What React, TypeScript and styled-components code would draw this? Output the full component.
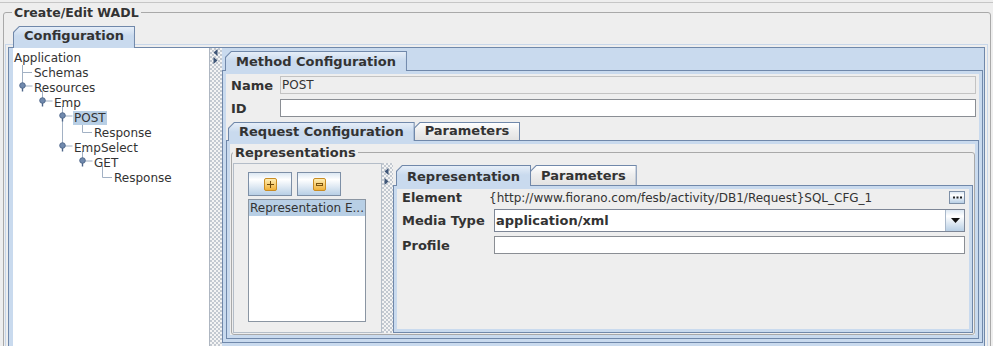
import React from "react";
import styled, { createGlobalStyle, css } from "styled-components";

const FONT = `"DejaVu Sans", "Liberation Sans", sans-serif`;
const LINE = "#7088aa";
const BAND = "#c9daee";
const SEL_GRAD = "linear-gradient(to bottom, #e6eef8 0px, #c9daee 9px, #c9daee 100%)";
const UNSEL_GRAD = "linear-gradient(to bottom, #ffffff 0px, #eeeeee 45%, #e2e2e2 100%)";
const BTN_GRAD = "linear-gradient(to bottom, #dde8f3 0%, #ffffff 30%, #b8cfe5 100%)";

const Global = createGlobalStyle`
  html, body { margin: 0; padding: 0; background: #eeeeee; }
  body { font-family: ${FONT}; color: #333333; }
  *, *::before, *::after { box-sizing: border-box; }
`;

const Screen = styled.div`
  width: 993px;
  height: 346px;
  overflow: hidden;
  background: #eeeeee;
  padding-top: 2px;
`;

const TopRule = styled.div`
  height: 1px;
  background: #c6c6c6;
`;

const Group = styled.fieldset<{ $m: string; $p: string }>`
  margin: ${(p) => p.$m};
  padding: ${(p) => p.$p};
  border: 1px solid #a9a9a9;
  border-radius: 3px;
  min-width: 0;
`;

const GroupTitle = styled.legend<{ $ml: number; $size: number }>`
  margin-left: ${(p) => p.$ml}px;
  padding: 0 2px;
  font-family: ${FONT};
  font-weight: bold;
  font-size: ${(p) => p.$size}px;
  line-height: 15px;
  color: #333333;
  white-space: nowrap;
`;

/* ---------- tabbed pane ---------- */
const PaneShell = styled.div<{ $pt: number; $mt: number; $w?: number; $grow?: boolean }>`
  display: flex;
  flex-direction: column;
  padding-top: ${(p) => p.$pt}px;
  margin-top: ${(p) => p.$mt}px;
  ${(p) => p.$w !== undefined && css`width: ${p.$w}px; flex: none;`}
  ${(p) => p.$grow && css`align-self: stretch;`}
`;

const TabStrip = styled.div<{ $pl: number }>`
  display: flex;
  align-items: flex-end;
  padding-left: ${(p) => p.$pl}px;
  position: relative;
  z-index: 2;
`;

const Tab = styled.div<{ $active: boolean; $h: number }>`
  position: relative;
  z-index: ${(p) => (p.$active ? 2 : 1)};
  height: ${(p) => (p.$active ? p.$h : p.$h - 1)}px;
  margin-bottom: ${(p) => (p.$active ? -1 : 0)}px;
  margin-right: -1px;
  padding: 1px 1px 0 1px;
  background: ${LINE};
  clip-path: polygon(0 6px, 6px 0, 100% 0, 100% 100%, 0 100%);
`;

const TabFace = styled.div<{ $active: boolean; $pb: number }>`
  height: 100%;
  display: flex;
  align-items: center;
  padding: 0 10px ${(p) => p.$pb}px 10px;
  background: ${(p) => (p.$active ? SEL_GRAD : UNSEL_GRAD)};
  clip-path: polygon(0 5.5px, 5.5px 0, 100% 0, 100% 100%, 0 100%);
  font-family: ${FONT};
  font-weight: bold;
  font-size: 13px;
  line-height: 1;
  color: #333333;
  white-space: nowrap;
`;

const TabBody = styled.div<{ $pad: string; $halo?: boolean; $grow?: boolean }>`
  position: relative;
  z-index: 0;
  border: 1px solid ${LINE};
  background: ${BAND};
  padding: ${(p) => p.$pad};
  display: flex;
  flex-direction: column;
  ${(p) => p.$halo && css`box-shadow: 0 0 0 2px #eeeeee, 0 0 0 3px #c8d7ea;`}
  ${(p) => p.$grow && css`flex: 1; min-height: 0;`}
`;

type PaneProps = {
  tabs: string[];
  tabH: number;
  stripPl: number;
  pt?: number;
  mt?: number;
  pb?: number;
  bodyPad: string;
  halo?: boolean;
  width?: number;
  grow?: boolean;
  children: React.ReactNode;
};

function TabbedPane({ tabs, tabH, stripPl, pt = 0, mt = 0, pb = 0, bodyPad, halo, width, grow, children }: PaneProps) {
  return (
    <PaneShell $pt={pt} $mt={mt} $w={width} $grow={grow}>
      <TabStrip $pl={stripPl}>
        {tabs.map((t, i) => (
          <Tab key={t} $active={i === 0} $h={tabH}>
            <TabFace $active={i === 0} $pb={pb}>{t}</TabFace>
          </Tab>
        ))}
      </TabStrip>
      <TabBody $pad={bodyPad} $halo={halo} $grow={grow}>
        {children}
      </TabBody>
    </PaneShell>
  );
}

/* ---------- config split ---------- */
const ConfigSplit = styled.div`
  display: flex;
  align-items: stretch;
  height: 320px;
`;

const TreePanel = styled.div`
  position: relative;
  width: 196px;
  flex: none;
  background: #ffffff;
  padding-top: 2px;
`;

const TreeRow = styled.div<{ $depth: number }>`
  height: 15px;
  display: flex;
  align-items: center;
  padding-left: ${(p) => 1 + p.$depth * 20}px;
  font-family: ${FONT};
  font-size: 12px;
  color: #333333;
  white-space: nowrap;
  position: relative;
  z-index: 1;
`;

const TreeLabel = styled.span<{ $selected?: boolean }>`
  display: inline-block;
  height: 14px;
  line-height: 14px;
  padding: 0 1px;
  margin-left: -1px;
  background: ${(p) => (p.$selected ? "#b8cfe5" : "transparent")};
`;

const TreeLines = styled.svg`
  position: absolute;
  left: 0;
  top: 0;
  pointer-events: none;
`;

const Divider = styled.div<{ $w: number; $pt: number; $pl: number; $gap: number; $edge?: boolean }>`
  width: ${(p) => p.$w}px;
  flex: none;
  background-color: #f4f4f4;
  background-image: radial-gradient(circle at 1px 1px, #a3adba 0.55px, transparent 0.95px),
    radial-gradient(circle at 1px 1px, #a3adba 0.55px, transparent 0.95px);
  background-size: 4px 4px;
  background-position: 0 0, 2px 2px;
  ${(p) => p.$edge && css`border-left: 1px solid #aeb6c1;`}
  display: flex;
  flex-direction: column;
  align-items: flex-start;
  gap: ${(p) => p.$gap}px;
  padding-top: ${(p) => p.$pt}px;
  padding-left: ${(p) => p.$pl}px;
`;

const ArrowGlyph = ({ dir }: { dir: "left" | "right" }) => (
  <svg width="5" height="7" viewBox="0 0 5 7" style={{ display: "block" }}>
    {dir === "left" ? (
      <polygon points="4.5,0 0.5,3.5 4.5,7" fill="#3f5677" />
    ) : (
      <polygon points="0.5,0 4.5,3.5 0.5,7" fill="#3f5677" />
    )}
  </svg>
);

/* ---------- method pane ---------- */
const PaneInner = styled.div<{ $pad?: string; $grow?: boolean }>`
  background: #eeeeee;
  display: flex;
  flex-direction: column;
  padding: ${(p) => p.$pad ?? "0"};
  ${(p) => p.$grow && css`flex: 1;`}
`;

const FieldGrid = styled.div`
  display: grid;
  grid-template-columns: 49px 1fr;
  grid-auto-rows: 18px;
  row-gap: 5px;
  padding: 0 3px 0 5px;
  align-items: center;
`;

const FieldLabel = styled.span`
  font-family: ${FONT};
  font-weight: bold;
  font-size: 13px;
  color: #333333;
  white-space: nowrap;
`;

const TextBox = styled.div<{ $readonly?: boolean }>`
  height: 100%;
  display: flex;
  align-items: center;
  padding-left: 1px;
  background: ${(p) => (p.$readonly ? "#eeeeee" : "#ffffff")};
  border: 1px solid ${(p) => (p.$readonly ? "#c3c3c3" : "#8a8e94")};
  font-family: ${FONT};
  font-size: 12px;
  color: #333333;
  white-space: nowrap;
  overflow: hidden;
  flex: 1;
  min-width: 0;
`;

/* ---------- representations ---------- */
const RepSplit = styled.div`
  display: flex;
  height: 170px;
`;

const ListSide = styled.div`
  width: 149px;
  flex: none;
  border: 1px solid #b4bdc8;
  padding: 8px 0 0 14px;
  display: flex;
  flex-direction: column;
`;

const ButtonRow = styled.div`
  display: flex;
  gap: 5px;
`;

const ToolButton = styled.div`
  width: 44px;
  height: 24px;
  border: 1px solid #7d8fa6;
  background: ${BTN_GRAD};
  display: flex;
  align-items: center;
  justify-content: center;
`;

const ItemList = styled.div`
  margin-top: 3px;
  width: 118px;
  height: 123px;
  border: 1px solid #8a95a2;
  background: #ffffff;
`;

const ListItem = styled.div<{ $selected?: boolean }>`
  height: 16px;
  line-height: 16px;
  padding-left: 1px;
  background: ${(p) => (p.$selected ? "#b8cfe5" : "transparent")};
  font-family: ${FONT};
  font-size: 12px;
  color: #333333;
  white-space: nowrap;
`;

const FormLine = styled.div<{ $h: number; $mt: number }>`
  display: grid;
  grid-template-columns: 92px 1fr;
  align-items: center;
  height: ${(p) => p.$h}px;
  margin-top: ${(p) => p.$mt}px;
`;

const ValueCell = styled.div`
  display: flex;
  align-items: center;
  height: 100%;
  min-width: 0;
`;

const ValueText = styled.span`
  flex: 1;
  margin-left: -5px;
  font-family: ${FONT};
  font-size: 12px;
  color: #333333;
  white-space: nowrap;
`;

const SmallButton = styled.div`
  width: 16px;
  height: 13px;
  flex: none;
  border: 1px solid #7d8fa6;
  background: ${BTN_GRAD};
  display: flex;
  align-items: center;
  justify-content: center;
`;

const Combo = styled.div`
  display: flex;
  height: 100%;
  border: 1px solid #7d8696;
  background: #ffffff;
`;

const ComboText = styled.div`
  flex: 1;
  display: flex;
  align-items: center;
  padding-left: 1px;
  font-family: ${FONT};
  font-weight: bold;
  font-size: 13px;
  color: #333333;
`;

const ComboArrow = styled.div`
  width: 19px;
  flex: none;
  border-left: 1px solid #a9b8ca;
  background: ${BTN_GRAD};
  display: flex;
  align-items: center;
  justify-content: center;
`;

const SquareIcon = ({ minus, id }: { minus?: boolean; id: string }) => (
  <svg width="13" height="13" viewBox="0 0 13 13" style={{ display: "block" }}>
    <defs>
      <linearGradient id={id} x1="0" y1="0" x2="0" y2="1">
        <stop offset="0" stopColor="#fff0b8" />
        <stop offset="1" stopColor="#f0ae32" />
      </linearGradient>
    </defs>
    <rect x="0.5" y="0.5" width="12" height="12" rx="1.5" fill={`url(#${id})`} stroke="#c98c22" />
    {minus ? (
      <rect x="3.5" y="5.5" width="6" height="2" fill="none" stroke="#7a520c" strokeWidth="1" />
    ) : (
      <path d="M3 6.5H10M6.5 3V10" stroke="#6b4607" strokeWidth="1" />
    )}
  </svg>
);

const DotsIcon = () => (
  <svg width="9" height="3" viewBox="0 0 9 3" style={{ display: "block" }}>
    <rect x="0" y="0.5" width="2" height="2" fill="#222" />
    <rect x="3.5" y="0.5" width="2" height="2" fill="#222" />
    <rect x="7" y="0.5" width="2" height="2" fill="#222" />
  </svg>
);

const CaretDown = () => (
  <svg width="9" height="5" viewBox="0 0 9 5" style={{ display: "block" }}>
    <polygon points="0,0 9,0 4.5,5" fill="#111" />
  </svg>
);

const TREE = [
  { label: "Application", depth: 0 },
  { label: "Schemas", depth: 1 },
  { label: "Resources", depth: 1 },
  { label: "Emp", depth: 2 },
  { label: "POST", depth: 3, selected: true },
  { label: "Response", depth: 4 },
  { label: "EmpSelect", depth: 3 },
  { label: "GET", depth: 4 },
  { label: "Response", depth: 5 },
];

const HANDLES: [number, number][] = [
  [9.5, 37.5],
  [29.5, 52.5],
  [49.5, 67.5],
  [49.5, 97.5],
  [69.5, 112.5],
];

function TreeDrawing() {
  const ln = "#a2b1c4";
  return (
    <TreeLines width="196" height="200" viewBox="0 0 196 200">
      <g stroke={ln} strokeWidth="1" fill="none">
        <path d="M9.5 17V35M9.5 24.5H19" />
        <path d="M29.5 43V50" />
        <path d="M49.5 58V95" />
        <path d="M69.5 73V84.5H79" />
        <path d="M69.5 103V110" />
        <path d="M89.5 118V129.5H99" />
        {HANDLES.map(([x, y]) => (
          <path key={`h${x}-${y}`} d={`M${x + 2.5} ${y + 0.5}H${x + 10}`} />
        ))}
      </g>
      {HANDLES.map(([x, y]) => (
        <g key={`k${x}-${y}`}>
          <path d={`M${x} ${y + 2}V${y + 6}`} stroke="#4c6488" strokeWidth="1.4" />
          <circle cx={x} cy={y} r="2.8" fill="#7089ad" stroke="#4c6488" strokeWidth="0.9" />
        </g>
      ))}
    </TreeLines>
  );
}

export default function App() {
  return (
    <>
      <Global />
      <Screen>
        <TopRule />
        <Group $m="2px 2px 0 3px" $p="6px 5px 0 4px">
          <GroupTitle $ml={4} $size={12.5}>Create/Edit WADL</GroupTitle>
          <TabbedPane tabs={["Configuration"]} tabH={22} stripPl={5} pb={4} bodyPad="0 1px 0 4px" halo>
            <ConfigSplit>
              <TreePanel>
                <TreeDrawing />
                {TREE.map((n, i) => (
                  <TreeRow key={i} $depth={n.depth}>
                    <TreeLabel $selected={n.selected}>{n.label}</TreeLabel>
                  </TreeRow>
                ))}
              </TreePanel>
              <Divider $w={13} $pt={1} $pl={3} $gap={1} $edge>
                <ArrowGlyph dir="left" />
                <ArrowGlyph dir="right" />
              </Divider>
              <TabbedPane tabs={["Method Configuration"]} tabH={20} stripPl={3} pt={3} pb={1} bodyPad="3px" width={761}>
                <PaneInner $pad="2px 0 0 0">
                  <FieldGrid>
                    <FieldLabel>Name</FieldLabel>
                    <TextBox $readonly>POST</TextBox>
                    <FieldLabel>ID</FieldLabel>
                    <TextBox />
                  </FieldGrid>
                  <TabbedPane tabs={["Request Configuration", "Parameters"]} tabH={19} stripPl={2} mt={5} pb={2} bodyPad="3px">
                    <PaneInner>
                      <Group $m="1px 0 0 1px" $p="3px 1px 1px 1px">
                        <GroupTitle $ml={0} $size={13}>Representations</GroupTitle>
                        <RepSplit>
                          <ListSide>
                            <ButtonRow>
                              <ToolButton>
                                <SquareIcon id="gp" />
                              </ToolButton>
                              <ToolButton>
                                <SquareIcon id="gm" minus />
                              </ToolButton>
                            </ButtonRow>
                            <ItemList>
                              <ListItem $selected>Representation E...</ListItem>
                            </ItemList>
                          </ListSide>
                          <Divider $w={11} $pt={5} $pl={2} $gap={3}>
                            <ArrowGlyph dir="left" />
                            <ArrowGlyph dir="right" />
                          </Divider>
                          <TabbedPane tabs={["Representation", "Parameters"]} tabH={21} stripPl={3} pt={2} bodyPad="3px" width={580} grow>
                            <PaneInner $pad="0 4px 0 5px" $grow>
                              <FormLine $h={17} $mt={0}>
                                <FieldLabel>Element</FieldLabel>
                                <ValueCell>
                                  <ValueText>{"{http://www.fiorano.com/fesb/activity/DB1/Request}SQL_CFG_1"}</ValueText>
                                  <SmallButton>
                                    <DotsIcon />
                                  </SmallButton>
                                </ValueCell>
                              </FormLine>
                              <FormLine $h={23} $mt={3}>
                                <FieldLabel>Media Type</FieldLabel>
                                <Combo>
                                  <ComboText>application/xml</ComboText>
                                  <ComboArrow>
                                    <CaretDown />
                                  </ComboArrow>
                                </Combo>
                              </FormLine>
                              <FormLine $h={18} $mt={4}>
                                <FieldLabel>Profile</FieldLabel>
                                <TextBox />
                              </FormLine>
                            </PaneInner>
                          </TabbedPane>
                        </RepSplit>
                      </Group>
                    </PaneInner>
                  </TabbedPane>
                </PaneInner>
              </TabbedPane>
            </ConfigSplit>
          </TabbedPane>
        </Group>
      </Screen>
    </>
  );
}
